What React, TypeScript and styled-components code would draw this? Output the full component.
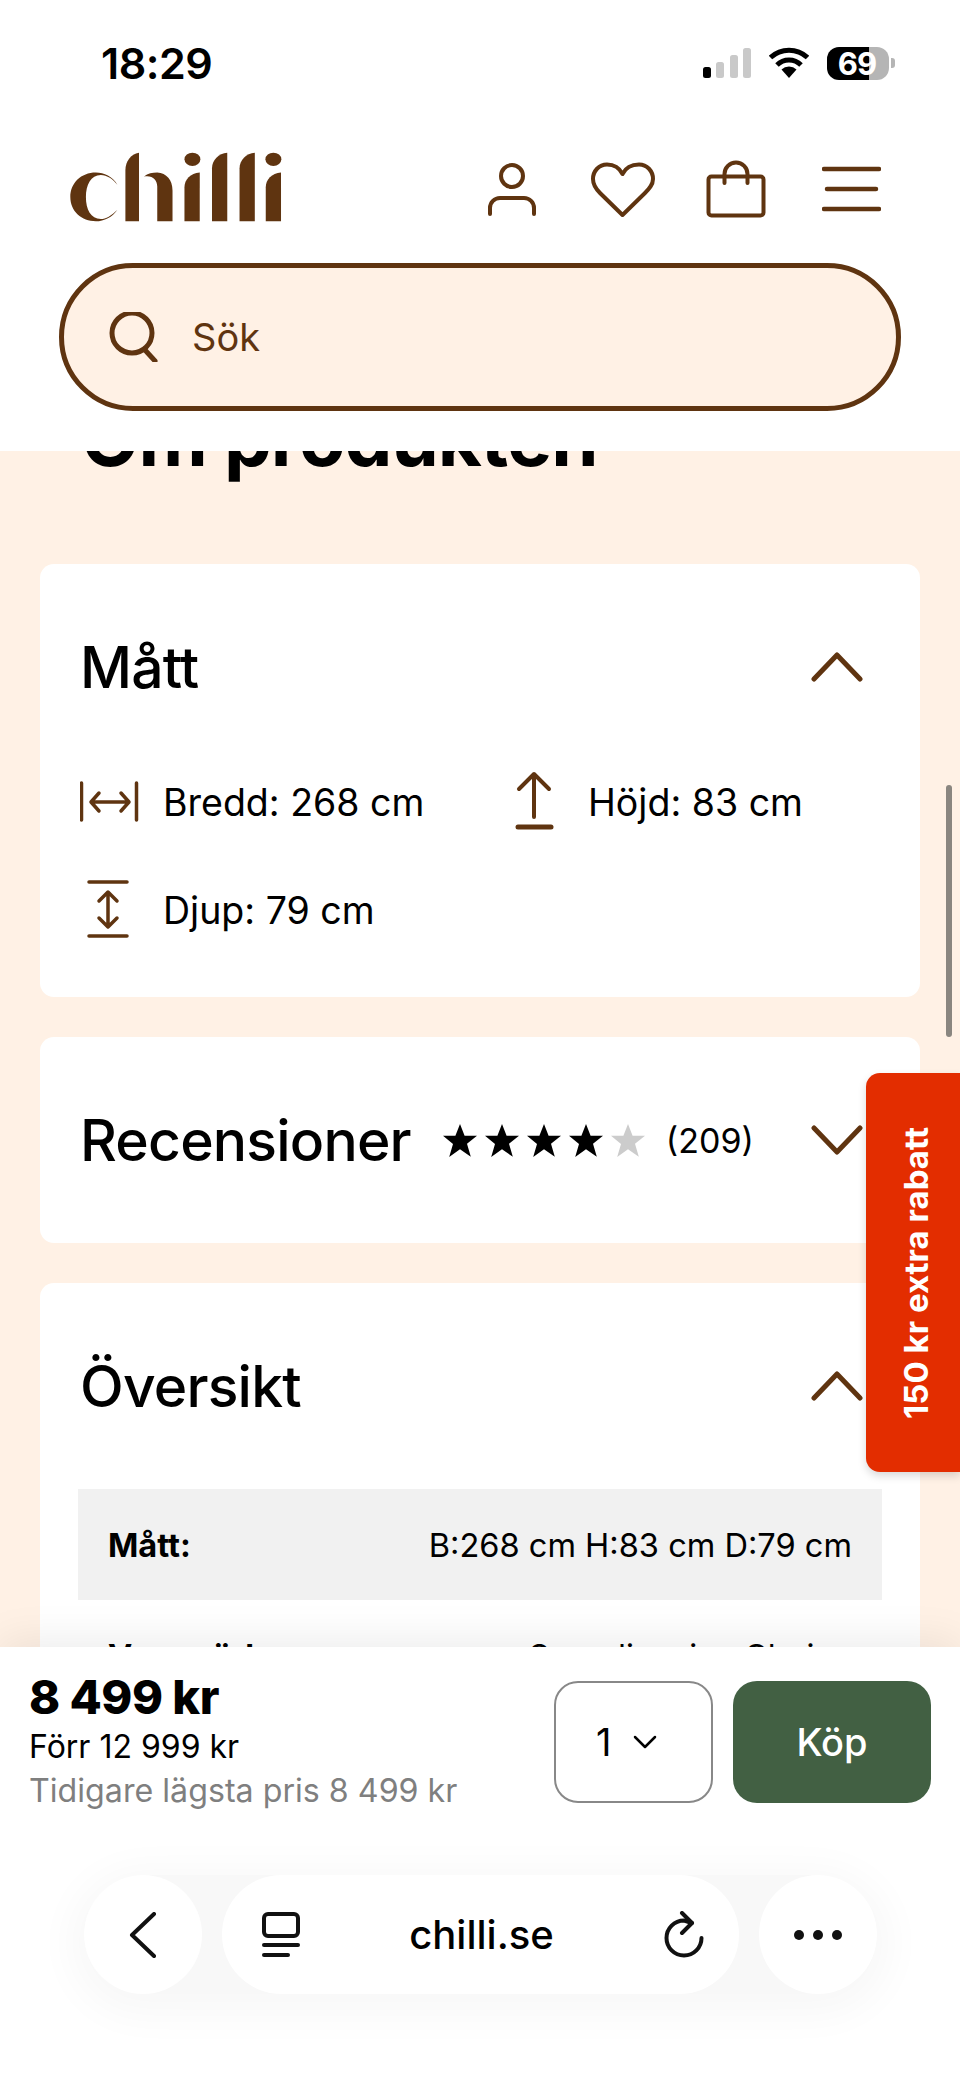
import styled, { createGlobalStyle } from "styled-components";

const BROWN = "#5f3410";
const PEACH = "#fff1e5";

const GlobalStyle = createGlobalStyle`
  html, body {
    margin: 0;
    padding: 0;
    background: #fff;
  }
  body {
    font-family: Inter, "Liberation Sans", sans-serif;
    color: #000;
  }
`;

const Page = styled.div`
  width: 960px;
  height: 2078px;
  display: flex;
  flex-direction: column;
  overflow: hidden;
  background: #fff;
`;

const StatusBar = styled.div`
  height: 126px;
  flex: none;
  display: flex;
  align-items: center;
  justify-content: space-between;
  padding: 0 65px 0 101px;
`;

const Time = styled.span`
  font-size: 43px;
  font-weight: 600;
  letter-spacing: -0.5px;
`;

const StatusIcons = styled.div`
  display: flex;
  align-items: center;
  gap: 18px;
`;

const Battery = styled.div`
  width: 62px;
  height: 33px;
  border-radius: 12px;
  background: linear-gradient(90deg, #000 68%, #b5b5b5 68%);
  color: #fff;
  font-size: 31px;
  font-weight: 700;
  line-height: 33px;
  text-align: center;
  padding-right: 2px;
  box-sizing: border-box;
  letter-spacing: -1px;
`;

const BatteryNub = styled.div`
  width: 4px;
  height: 10px;
  margin-left: -16px;
  border-radius: 0 3px 3px 0;
  background: #b5b5b5;
`;

const TopBar = styled.header`
  height: 137px;
  flex: none;
  display: flex;
  align-items: flex-start;
  justify-content: space-between;
  padding: 24px 79px 0 67px;
  box-sizing: border-box;
`;

const NavIcons = styled.nav`
  display: flex;
  margin-top: 10px;
  gap: 50px;
  color: ${BROWN};
`;

const SearchBox = styled.div`
  flex: none;
  height: 148px;
  margin: 0 59px 40px;
  box-sizing: border-box;
  border: 5px solid ${BROWN};
  border-radius: 74px;
  background: ${PEACH};
  display: flex;
  align-items: center;
  gap: 34px;
  padding-left: 44px;
  color: ${BROWN};
  font-size: 38px;
`;

const Content = styled.main`
  flex: 1;
  min-height: 0;
  position: relative;
  overflow: hidden;
  background: ${PEACH};
  padding: 0 40px;
`;

const Heading = styled.h1`
  margin: -53px 0 86px 41px;
  font-size: 76px;
  line-height: 80px;
  font-weight: 700;
  letter-spacing: -1px;
`;

const Card = styled.section`
  background: #fff;
  border-radius: 14px;
  margin-bottom: 40px;
`;

const CardHead = styled.div`
  height: 206px;
  display: flex;
  align-items: center;
  padding: 0 57px 0 40px;
`;

const CardTitle = styled.h2`
  margin: 0;
  font-size: 57px;
  font-weight: 500;
  letter-spacing: -0.8px;
`;

const Chevron = styled.svg`
  margin-left: auto;
  flex: none;
  color: ${BROWN};
`;

const Stars = styled.div`
  display: flex;
  gap: 8px;
  margin-left: 32px;
`;

const Count = styled.span`
  margin-left: 21px;
  font-size: 34px;
`;

const DimensionGrid = styled.div`
  display: grid;
  grid-template-columns: 425px 1fr;
  row-gap: 44px;
  padding: 0 40px 55px;
`;

const Dimension = styled.div`
  height: 64px;
  display: flex;
  align-items: center;
  gap: 23px;
  font-size: 37.500px;
  color: ${BROWN};
`;

const DimensionText = styled.span`
  color: #000;
`;

const SpecTable = styled.div`
  margin: 0 38px;
  font-size: 32.600px;
`;

const SpecRow = styled.div<{ $shaded?: boolean }>`
  height: 111px;
  display: flex;
  align-items: center;
  justify-content: space-between;
  padding: 0 30px;
  background: ${(p) => (p.$shaded ? "#f1f1f1" : "transparent")};
`;

const SpecLabel = styled.span`
  font-weight: 700;
`;

const Scrollbar = styled.div`
  position: absolute;
  top: 334px;
  right: 8px;
  width: 6px;
  height: 252px;
  border-radius: 3px;
  background: #8a8680;
`;

const PromoTab = styled.div`
  position: absolute;
  top: 622px;
  right: 0;
  width: 94px;
  height: 399px;
  box-sizing: border-box;
  padding-left: 6px;
  border-radius: 14px 0 0 14px;
  background: #e32d00;
  box-shadow: 0 4px 8px rgba(0, 0, 0, 0.15);
  display: flex;
  align-items: center;
  justify-content: center;
`;

const PromoText = styled.span`
  writing-mode: vertical-rl;
  transform: rotate(180deg);
  color: #fff;
  font-size: 33px;
  font-weight: 700;
  white-space: nowrap;
`;

const BuySheet = styled.footer`
  flex: none;
  height: 431px;
  position: relative;
  background: #fff;
  box-shadow: 0 -6px 40px rgba(0, 0, 0, 0.08);
  box-sizing: border-box;
  padding: 25px 29px 0 29px;
`;

const BuyRow = styled.div`
  display: flex;
  align-items: flex-start;
`;

const Prices = styled.div`
  flex: 1;
`;

const Price = styled.div`
  font-size: 47px;
  line-height: 50px;
  font-weight: 800;
  letter-spacing: -0.5px;
`;

const OldPrice = styled.div`
  margin-top: 5px;
  font-size: 32px;
  line-height: 40px;
`;

const LowestPrice = styled.div`
  margin-top: 4px;
  font-size: 32.200px;
  line-height: 40px;
  color: #7f7f7f;
`;

const QtySelect = styled.div`
  width: 159px;
  height: 122px;
  margin-top: 9px;
  box-sizing: border-box;
  border: 2px solid #888;
  border-radius: 24px;
  display: flex;
  align-items: center;
  gap: 22px;
  padding-left: 40px;
  font-size: 38px;
`;

const BuyButton = styled.button`
  width: 198px;
  height: 122px;
  margin: 9px 0 0 20px;
  border: 0;
  border-radius: 24px;
  background: #426043;
  color: #fff;
  font-family: inherit;
  font-size: 38px;
  font-weight: 500;
`;

const BrowserBar = styled.div`
  margin: 64px 54px 0 55px;
  height: 119px;
  display: flex;
  gap: 20px;
  border-radius: 60px;
  background: #f8f8f8;
  box-shadow: 0 8px 40px 14px #f8f8f8;
`;

const RoundButton = styled.div`
  width: 118px;
  flex: none;
  border-radius: 50%;
  background: #fff;
  display: flex;
  align-items: center;
  justify-content: center;
`;

const AddressPill = styled.div`
  flex: 1;
  border-radius: 60px;
  background: #fff;
  display: flex;
  align-items: center;
  justify-content: space-between;
  padding: 0 34px 0 40px;
  font-size: 40px;
  font-weight: 500;
`;

function Logo() {
  return (
    <svg width="217" height="73" viewBox="80 60 650 220" fill={BROWN}>
      <path d="M230 165C215 140 190 128 165 128C120 128 88 160 88 202C88 245 122 275 165 275C190 275 215 262 230 240C212 258 195 268 180 268C150 268 135 240 135 202C135 165 150 135 180 135C198 135 218 148 230 165Z" />
      <path d="M254 275V120C254 95 270 72 295 68V275Z" />
      <path d="M310 140C322 130 335 128 350 128C378 130 396 150 396 182V275H350V170C350 150 335 135 310 140Z" />
      <ellipse cx="456" cy="88" rx="24" ry="20" />
      <path d="M432 275V172C432 150 450 130 478 128V275Z" />
      <path d="M515 275V115C515 90 535 70 561 68V275Z" />
      <path d="M598 275V115C598 90 618 70 644 68V275Z" />
      <ellipse cx="700" cy="88" rx="24" ry="20" />
      <path d="M677 275V172C677 150 695 130 723 128V275Z" />
    </svg>
  );
}

function Star({ color }: { color: string }) {
  return (
    <svg width="34" height="33" viewBox="0 0 34 33" fill={color}>
      <path d="M17 0l4.600 11.800H34l-10 8 3.800 13L17 25.200 6.200 33 10 20 0 11.800h12.400z" />
    </svg>
  );
}

function ChevronIcon({ up }: { up?: boolean }) {
  return (
    <Chevron width="52" height="30" viewBox="0 0 52 30" fill="none" stroke="currentColor" strokeWidth="5" strokeLinecap="round" strokeLinejoin="round">
      <path d={up ? "M3 27L26 3l23 24" : "M3 3l23 24L49 3"} />
    </Chevron>
  );
}

export default function App() {
  return (
    <Page>
      <GlobalStyle />
      <StatusBar>
        <Time>18:29</Time>
        <StatusIcons>
          <svg width="48" height="32" viewBox="0 0 48 32">
            <rect x="0" y="20" width="8" height="11" rx="2.500" fill="#000" />
            <rect x="13" y="15" width="8" height="16" rx="2.500" fill="#c9c9c9" />
            <rect x="27" y="8" width="8" height="23" rx="2.500" fill="#c9c9c9" />
            <rect x="40" y="1" width="8" height="30" rx="2.500" fill="#c9c9c9" />
          </svg>
          <svg width="40" height="32" viewBox="0 0 40 32" fill="none" stroke="#000" strokeWidth="5">
            <path d="M1.500 10.500A27 27 0 0 1 38.500 10.500" />
            <path d="M8 18A17 17 0 0 1 32 18" />
            <path d="M20 31L12.500 22.500A11 11 0 0 1 27.500 22.500Z" fill="#000" stroke="none" />
          </svg>
          <Battery>69</Battery>
          <BatteryNub />
        </StatusIcons>
      </StatusBar>

      <TopBar>
        <Logo />
        <NavIcons>
          <svg width="53" height="60" viewBox="0 0 53 60" fill="none" stroke="currentColor" strokeWidth="4" strokeLinecap="round">
            <circle cx="24" cy="16" r="11" />
            <path d="M2 54v-6a10 10 0 0 1 10-10h24a10 10 0 0 1 10 10v6" />
          </svg>
          <svg width="64" height="60" viewBox="0 0 64 60" fill="none" stroke="currentColor" strokeWidth="4" strokeLinejoin="round">
            <path d="M31.500 14C28 7 22 4.500 16 4.500C8 4.500 2 11 2 19C2 25 5 29 9 33L31.500 55L54 33C58 29 62 25 62 19C62 11 56 4.500 48 4.500C41 4.500 35 7 31.500 14Z" />
          </svg>
          <svg width="67" height="60" viewBox="0 0 67 60" fill="none" stroke="currentColor" strokeWidth="4" strokeLinecap="round">
            <rect x="3.500" y="16.500" width="55" height="39" rx="3" />
            <path d="M19.500 23V14a11.500 11.500 0 0 1 23 0V23" />
          </svg>
          <svg width="59" height="60" viewBox="0 0 59 60" fill="none" stroke="currentColor" strokeWidth="4.500" strokeLinecap="round">
            <path d="M2 9h55M5 29h49M2 49h55" />
          </svg>
        </NavIcons>
      </TopBar>

      <SearchBox>
        <svg width="50" height="50" viewBox="0 0 50 50" fill="none" stroke="currentColor" strokeWidth="5" strokeLinecap="round">
          <circle cx="24" cy="21" r="20" />
          <path d="M37 38l10 11" />
        </svg>
        Sök
      </SearchBox>

      <Content>
        <Heading>Om produkten</Heading>

        <Card>
          <CardHead>
            <CardTitle>Mått</CardTitle>
            <ChevronIcon up />
          </CardHead>
          <DimensionGrid>
            <Dimension>
              <svg width="60" height="64" viewBox="0 0 60 64" fill="none" stroke="currentColor" strokeWidth="3.500" strokeLinecap="round" strokeLinejoin="round">
                <path d="M1.500 13v37M56.500 13v37" />
                <path d="M12 32h36M19 23l-8 9 8 9M41 23l8 9-8 9" />
              </svg>
              <DimensionText>Bredd: 268 cm</DimensionText>
            </Dimension>
            <Dimension>
              <svg width="60" height="64" viewBox="0 0 60 64" fill="none" stroke="currentColor" strokeWidth="4" strokeLinecap="round" strokeLinejoin="round">
                <path d="M29 4v43M14 19L29 4l15 15" />
                <path d="M13 57h33" strokeWidth="5" />
              </svg>
              <DimensionText>Höjd: 83 cm</DimensionText>
            </Dimension>
            <Dimension>
              <svg width="60" height="64" viewBox="0 0 60 64" fill="none" stroke="currentColor" strokeWidth="3.500" strokeLinecap="round" strokeLinejoin="round">
                <path d="M9 4h38M9 58h38" />
                <path d="M28 15v34M19 23l9-9 9 9M19 40l9 9 9-9" />
              </svg>
              <DimensionText>Djup: 79 cm</DimensionText>
            </Dimension>
          </DimensionGrid>
        </Card>

        <Card>
          <CardHead>
            <CardTitle>Recensioner</CardTitle>
            <Stars>
              <Star color="#000" />
              <Star color="#000" />
              <Star color="#000" />
              <Star color="#000" />
              <Star color="#cccccc" />
            </Stars>
            <Count>(209)</Count>
            <ChevronIcon />
          </CardHead>
        </Card>

        <Card>
          <CardHead>
            <CardTitle>Översikt</CardTitle>
            <ChevronIcon up />
          </CardHead>
          <SpecTable>
            <SpecRow $shaded>
              <SpecLabel>Mått:</SpecLabel>
              <span>B:268 cm H:83 cm D:79 cm</span>
            </SpecRow>
            <SpecRow>
              <SpecLabel>Varumärke</SpecLabel>
              <span>Scandinavian Choice</span>
            </SpecRow>
          </SpecTable>
        </Card>

        <Scrollbar />
        <PromoTab>
          <PromoText>150 kr extra rabatt</PromoText>
        </PromoTab>
      </Content>

      <BuySheet>
        <BuyRow>
          <Prices>
            <Price>8 499 kr</Price>
            <OldPrice>Förr 12 999 kr</OldPrice>
            <LowestPrice>Tidigare lägsta pris 8 499 kr</LowestPrice>
          </Prices>
          <QtySelect>
            1
            <svg width="24" height="14" viewBox="0 0 24 14" fill="none" stroke="#000" strokeWidth="2.500" strokeLinecap="round" strokeLinejoin="round">
              <path d="M2 2l10 10L22 2" />
            </svg>
          </QtySelect>
          <BuyButton>Köp</BuyButton>
        </BuyRow>

        <BrowserBar>
          <RoundButton>
            <svg width="28" height="46" viewBox="0 0 28 46" fill="none" stroke="#111" strokeWidth="4" strokeLinecap="round" strokeLinejoin="round">
              <path d="M25 2L3 23l22 21" />
            </svg>
          </RoundButton>
          <AddressPill>
            <svg width="38" height="46" viewBox="0 0 38 46" fill="none" stroke="#111" strokeWidth="4" strokeLinecap="round">
              <rect x="2" y="2" width="34" height="22" rx="4" />
              <path d="M2 33h34" />
              <path d="M2 43h24" />
            </svg>
            chilli.se
            <svg width="42" height="48" viewBox="0 0 42 48" fill="none" stroke="#111" strokeWidth="4" strokeLinecap="round" strokeLinejoin="round">
              <path d="M38.500 27A17.500 17.500 0 1 1 21 9.500L29 12" />
              <path d="M19 2l10 10-10 10" />
            </svg>
          </AddressPill>
          <RoundButton>
            <svg width="48" height="12" viewBox="0 0 48 12" fill="#111">
              <circle cx="5" cy="6" r="5" />
              <circle cx="24" cy="6" r="5" />
              <circle cx="43" cy="6" r="5" />
            </svg>
          </RoundButton>
        </BrowserBar>
      </BuySheet>
    </Page>
  );
}
